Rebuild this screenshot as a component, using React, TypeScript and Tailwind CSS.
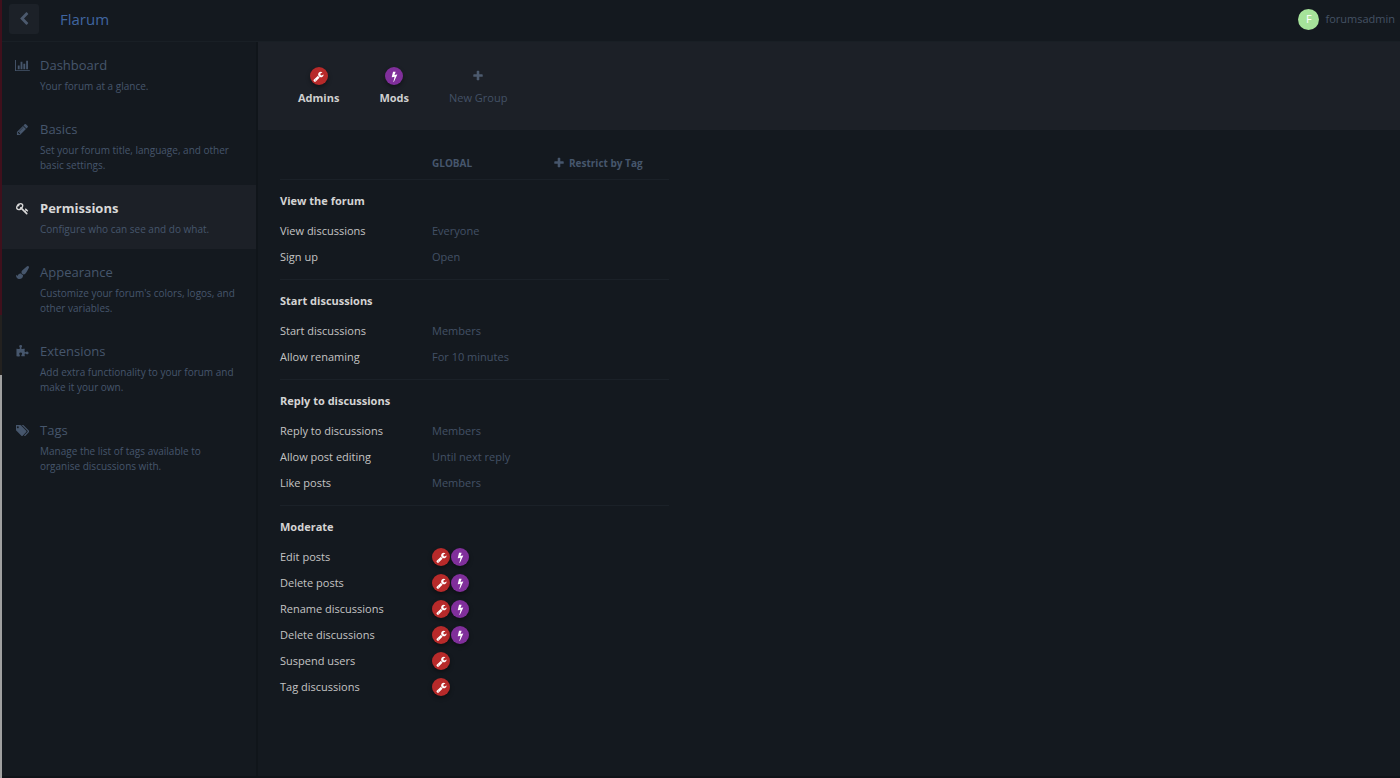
import React from 'react';

type IconProps = { path: string; viewBox?: string; className?: string };

const PATHS = {
  back: 'M1427 301l-531 531 531 531q19 19 19 45t-19 45l-166 166q-19 19-45 19t-45-19l-742-742q-19-19-19-45t19-45l742-742q19-19 45-19t45 19l166 166q19 19 19 45t-19 45z',
  plus: 'M1600 736v192q0 40-28 68t-68 28h-416v416q0 40-28 68t-68 28h-192q-40 0-68-28t-28-68v-416h-416q-40 0-68-28t-28-68v-192q0-40 28-68t68-28h416v-416q0-40 28-68t68-28h192q40 0 68 28t28 68v416h416q40 0 68 28t28 68z',
  bolt: 'M1333 566q18 20 7 44l-540 1157q-13 25-42 25-4 0-14-2-17-5-25.5-19t-4.5-30l197-808-406 101q-4 1-12 1-18 0-31-11-18-15-13-39l201-825q4-14 16-23t28-9h328q19 0 32 12.5t13 29.5q0 8-5 18l-171 463 396-98q8-2 12-2 19 0 34 15z',
  wrench: 'M448 1472q0-26-19-45t-45-19-45 19-19 45 19 45 45 19 45-19 19-45zm644-420l-682 682q-37 37-90 37-52 0-91-37l-106-108q-38-36-38-90 0-53 38-91l681-681q39 98 114.5 173.5t173.5 114.5zm634-435q0 39-23 106-47 134-164.5 217.5t-258.5 83.5q-185 0-316.5-131.5t-131.5-316.5 131.5-316.5 316.5-131.5q58 0 121.5 16.5t107.5 46.5q16 11 16 28t-16 28l-293 169v224l193 107q5-3 79-48.5t135.5-81 70.5-35.5q15 0 23.5 10t8.5 25z',
  chart: 'M640 896v512h-256v-512h256zm384-512v1024h-256v-1024h256zm1024 1152v128h-2048v-1536h128v1408h1920zm-640-896v768h-256v-768h256zm384-384v1152h-256v-1152h256z',
  pencil: 'M491 1536l91-91-235-235-91 91v107h128v128h107zm523-928q0-22-22-22-10 0-17 7l-542 542q-7 7-7 17 0 22 22 22 10 0 17-7l542-542q7-7 7-17zm-54-192l416 416-832 832h-416v-416zm683 96q0 53-37 90l-166 166-416-416 166-165q36-38 90-38 53 0 91 38l235 234q37 39 37 91z',
  key: 'M832 512q0-80-56-136t-136-56-136 56-56 136q0 42 19 83-41-19-83-19-80 0-136 56t-56 136 56 136 136 56 136-56 56-136q0-42-19-83 41 19 83 19 80 0 136-56t56-136zm851 704q0 17-49 66t-66 49q-9 0-28.5-16t-36.5-33-38.5-40-24.5-26l-96 96 220 220q28 28 28 68 0 42-39 81t-81 39q-40 0-68-28l-671-671q-176 131-365 131-163 0-265.5-102.5t-102.5-265.5q0-160 95-313t248-248 313-95q163 0 265.5 102.5t102.5 265.5q0 189-131 365l355 355 96-96q-3-3-26-24.5t-40-38.5-33-36.5-16-28.5q0-17 49-66t66-49q13 0 23 10 6 6 46 44.5t82 79.5 86.5 86 73 78 28.5 41z',
  brush: 'M1615 0q70 0 122.5 46.5t52.5 116.5q0 63-45 151-332 629-465 752-97 91-218 91-126 0-216.5-92.5t-90.5-219.5q0-128 92-212l638-579q59-54 130-54zm-909 1034q39 76 106.5 130t150.5 76l1 71q4 213-129.5 347t-348.5 134q-123 0-218-46.5t-152.5-127.5-86.5-183-29-220q7 5 41 30t62 44.5 59 36.5 46 17q41 0 55-37 25-66 57.5-112.5t69.5-76 88-47.5 103-25.5 125-10.5z',
  puzzle: 'M1728 1098q0 81-44.5 135t-123.5 54q-41 0-77.5-17.5t-59-38-56.5-38-71-17.5q-110 0-110 124 0 39 16 115t15 115v5q-22 0-33 1-34 3-97.5 11.5t-115.5 13.5-98 5q-61 0-103-26.5t-42-83.5q0-37 17.5-71t38-56.5 38-59 17.5-77.5q0-79-54-123.5t-135-44.5q-84 0-143 45.5t-59 127.5q0 43 15 83t33.5 64.5 33.5 53 15 50.5q0 45-46 89-37 35-117 35-95 0-245-24-9-2-27.5-4t-27.5-4l-13-2q-1 0-3-1-2 0-2-1v-1024q2 1 17.5 3.5t34 5 21.5 3.5q150 24 245 24 80 0 117-35 46-44 46-89 0-22-15-50.5t-33.5-53-33.5-64.5-15-83q0-82 59-127.5t144-45.5q80 0 134 44.5t54 123.5q0 41-17.5 77.5t-38 59-38 56.5-17.5 71q0 57 42 83.5t103 26.5q64 0 180-15t163-17v2q-1 2-3.5 17.5t-5 34-3.5 21.5q-24 150-24 245 0 80 35 117 44 46 89 46 22 0 50.5-15t53-33.5 64.5-33.5 83-15q82 0 127.5 59t45.5 143z',
  tags: 'M384 448q0-53-37.5-90.5t-90.5-37.5-90.5 37.5-37.5 90.5 37.5 90.5 90.5 37.5 90.5-37.5 37.5-90.5zm1067 576q0 53-37 90l-491 492q-39 37-91 37-53 0-90-37l-715-716q-38-37-64.5-101t-26.5-117v-416q0-52 38-90t90-38h416q53 0 117 26.5t102 64.5l715 714q37 39 37 91zm384 0q0 53-37 90l-491 492q-39 37-91 37-36 0-59-14t-53-45l470-470q37-37 37-90 0-52-37-91l-715-714q-38-38-102-64.5t-117-26.5h224q53 0 117 26.5t102 64.5l715 714q37 39 37 91z',
};

const NAV_ITEMS = [
  { icon: PATHS.chart, viewBox: '0 0 2048 1792', title: 'Dashboard', text: 'Your forum at a glance.' },
  { icon: PATHS.pencil, title: 'Basics', text: 'Set your forum title, language, and other basic settings.' },
  { icon: PATHS.key, title: 'Permissions', text: 'Configure who can see and do what.', active: true },
  { icon: PATHS.brush, title: 'Appearance', text: "Customize your forum's colors, logos, and other variables." },
  { icon: PATHS.puzzle, title: 'Extensions', text: 'Add extra functionality to your forum and make it your own.' },
  { icon: PATHS.tags, viewBox: '0 0 1920 1792', title: 'Tags', text: 'Manage the list of tags available to organise discussions with.' },
];

type Group = 'admin' | 'mod';
type Permission = { label: string; value?: string; groups?: Group[] };

const SECTIONS: { title: string; permissions: Permission[] }[] = [
  {
    title: 'View the forum',
    permissions: [
      { label: 'View discussions', value: 'Everyone' },
      { label: 'Sign up', value: 'Open' },
    ],
  },
  {
    title: 'Start discussions',
    permissions: [
      { label: 'Start discussions', value: 'Members' },
      { label: 'Allow renaming', value: 'For 10 minutes' },
    ],
  },
  {
    title: 'Reply to discussions',
    permissions: [
      { label: 'Reply to discussions', value: 'Members' },
      { label: 'Allow post editing', value: 'Until next reply' },
      { label: 'Like posts', value: 'Members' },
    ],
  },
  {
    title: 'Moderate',
    permissions: [
      { label: 'Edit posts', groups: ['admin', 'mod'] },
      { label: 'Delete posts', groups: ['admin', 'mod'] },
      { label: 'Rename discussions', groups: ['admin', 'mod'] },
      { label: 'Delete discussions', groups: ['admin', 'mod'] },
      { label: 'Suspend users', groups: ['admin'] },
      { label: 'Tag discussions', groups: ['admin'] },
    ],
  },
];

const Icon: React.FC<IconProps> = ({ path, viewBox = '0 0 1792 1792', className }) => (
  <svg viewBox={viewBox} fill="currentColor" aria-hidden="true" className={className}>
    <path d={path} />
  </svg>
);

const Badge: React.FC<{ group: Group }> = ({ group }) => (
  <span
    className={`flex h-[18px] w-[18px] items-center justify-center rounded-full text-white shadow-[0_2px_4px_rgba(0,0,0,0.4)] ${
      group === 'admin' ? 'bg-[#b72a2a]' : 'bg-[#802f9b]'
    }`}
  >
    <Icon path={group === 'admin' ? PATHS.wrench : PATHS.bolt} className="h-[11px] w-[11px]" />
  </span>
);

const Header = () => (
  <header className="flex h-[42px] items-center border-b border-[#191f25] pr-[5px] pl-[7px] pb-[3px]">
    <button
      aria-label="Back"
      className="flex h-[30px] w-[30px] items-center justify-center rounded-[3px] bg-[#1c2128] text-[#4c5a6e]"
    >
      <Icon path={PATHS.back} className="h-[14px] w-[14px]" />
    </button>
    <a href="#" className="ml-[21px] text-[15px] leading-5 text-[#4065a0]">
      Flarum
    </a>
    <button className="ml-auto flex items-center gap-[6px] text-[11px] text-[#445264]">
      <span className="flex h-[21px] w-[21px] items-center justify-center rounded-full bg-[#a6e39a] text-[11px] text-white">
        F
      </span>
      forumsadmin
    </button>
  </header>
);

const Sidebar = () => (
  <nav className="w-[256px] shrink-0 border-r-2 border-[#10151a]">
    {NAV_ITEMS.map((item) => (
      <a
        key={item.title}
        href="#"
        className={`flex px-[13px] py-3 text-[#46566c] ${item.active ? 'bg-[#1c2027]' : ''}`}
      >
        <span className={`flex h-[22px] w-[15px] shrink-0 items-center justify-center ${item.active ? 'text-[#d8d8d8]' : ''}`}>
          <Icon path={item.icon} viewBox={item.viewBox} className="h-[13px] shrink-0" />
        </span>
        <span className="ml-[10px]">
          <span className={`block text-[13px] leading-[22px] ${item.active ? 'font-bold text-[#d8d8d8]' : ''}`}>
            {item.title}
          </span>
          <span className="mt-[3px] block text-[10px] leading-[15px]">{item.text}</span>
        </span>
      </a>
    ))}
  </nav>
);

const GroupBar = () => (
  <div className="flex h-[88px] bg-[#1c2027] px-5 text-[11px]">
    <button className="flex flex-col items-center gap-[5px] px-5 pt-[25px] pb-5 font-bold text-[#cfcfcf]">
      <Badge group="admin" />
      Admins
    </button>
    <button className="flex flex-col items-center gap-[5px] px-5 pt-[25px] pb-5 font-bold text-[#cfcfcf]">
      <Badge group="mod" />
      Mods
    </button>
    <button className="flex flex-col items-center gap-[5px] px-5 pt-[25px] pb-5 text-[#435166]">
      <span className="flex h-[18px] items-center text-[#4c5a6e]">
        <Icon path={PATHS.plus} className="h-[12px] w-[12px]" />
      </span>
      New Group
    </button>
  </div>
);

const PermissionTable = () => (
  <table className="mt-[17px] ml-[22px] w-[389px] table-fixed text-left text-[11px] leading-[18px] text-[#c4c4c4]">
    <colgroup>
      <col className="w-[152px]" />
      <col className="w-[121px]" />
      <col />
    </colgroup>
    <thead>
      <tr className="h-[32px] border-b border-[#1b2128] text-[10px] text-[#46566c]">
        <td />
        <th scope="col" className="font-bold">GLOBAL</th>
        <th scope="col">
          <button className="flex items-center gap-[4px] font-bold">
            <Icon path={PATHS.plus} className="h-[12px] w-[12px]" />
            Restrict by Tag
          </button>
        </th>
      </tr>
    </thead>
    {SECTIONS.map((section) => (
      <tbody key={section.title} className="border-b border-[#1b2128] last:border-b-0">
        <tr className="h-[39px]">
          <th scope="rowgroup" colSpan={3} className="pt-[4px] font-bold text-[#d4d4d4]">
            {section.title}
          </th>
        </tr>
        {section.permissions.map(({ label, value, groups }) => (
          <tr key={label} className="h-[26px]">
            <th scope="row" className="font-normal">{label}</th>
            <td colSpan={2}>
              <button className="flex gap-px text-[#435166]" aria-label={value ? undefined : `${label} groups`}>
                {value}
                {groups?.map((group) => <Badge key={group} group={group} />)}
              </button>
            </td>
          </tr>
        ))}
        <tr className="h-[9px]">
          <td colSpan={3} />
        </tr>
      </tbody>
    ))}
  </table>
);

export default function App() {
  return (
    <div className="flex min-h-screen bg-[#14191f] font-['Open_Sans',sans-serif]">
      {/* Sliver of the window behind */}
      <div className="flex w-[2px] shrink-0 flex-col">
        <div className="grow-[315] bg-[#40101c]" />
        <div className="grow-[60] bg-[#23211f]" />
        <div className="grow-[403] bg-[#a0a0a0]" />
      </div>
      <div className="flex min-w-0 flex-1 flex-col border-b-2 border-[#0f1318]">
        <Header />
        <div className="flex flex-1">
          <Sidebar />
          <main className="min-w-0 flex-1">
            <GroupBar />
            <PermissionTable />
          </main>
        </div>
      </div>
    </div>
  );
}
